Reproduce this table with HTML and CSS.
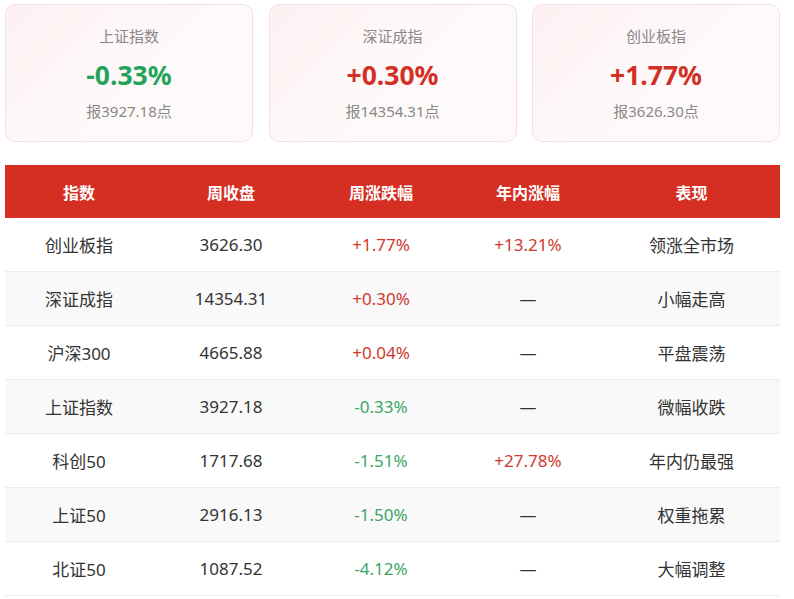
FILE: index.html
```html
<!DOCTYPE html>
<html lang="zh-CN">
<head>
<meta charset="utf-8">
<link rel="stylesheet" href="styles.css">
</head>
<body>
<div class="page">
  <div class="cards">
    <div class="card">
      <div class="card-label">上证指数</div>
      <div class="card-value down">-0.33%</div>
      <div class="card-sub">报3927.18点</div>
    </div>
    <div class="card">
      <div class="card-label">深证成指</div>
      <div class="card-value up">+0.30%</div>
      <div class="card-sub">报14354.31点</div>
    </div>
    <div class="card">
      <div class="card-label">创业板指</div>
      <div class="card-value up">+1.77%</div>
      <div class="card-sub">报3626.30点</div>
    </div>
  </div>
  <table class="data">
    <colgroup>
      <col class="c1"><col class="c2"><col class="c3"><col class="c4"><col class="c5">
    </colgroup>
    <thead>
      <tr><th>指数</th><th>周收盘</th><th>周涨跌幅</th><th>年内涨幅</th><th>表现</th></tr>
    </thead>
    <tbody>
      <tr><td>创业板指</td><td>3626.30</td><td class="up">+1.77%</td><td class="up">+13.21%</td><td>领涨全市场</td></tr>
      <tr><td>深证成指</td><td>14354.31</td><td class="up">+0.30%</td><td>—</td><td>小幅走高</td></tr>
      <tr><td>沪深300</td><td>4665.88</td><td class="up">+0.04%</td><td>—</td><td>平盘震荡</td></tr>
      <tr><td>上证指数</td><td>3927.18</td><td class="down">-0.33%</td><td>—</td><td>微幅收跌</td></tr>
      <tr><td>科创50</td><td>1717.68</td><td class="down">-1.51%</td><td class="up">+27.78%</td><td>年内仍最强</td></tr>
      <tr><td>上证50</td><td>2916.13</td><td class="down">-1.50%</td><td>—</td><td>权重拖累</td></tr>
      <tr><td>北证50</td><td>1087.52</td><td class="down">-4.12%</td><td>—</td><td>大幅调整</td></tr>
    </tbody>
  </table>
</div>
</body>
</html>
```
FILE: styles.css
```css
html, body {
  margin: 0;
  padding: 0;
  background: #ffffff;
}
body {
  font-family: "Noto Sans", "Noto Sans CJK SC", sans-serif;
  color: #333333;
}
.page {
  width: 775px;
  padding: 4px 0 0 5px;
}
.cards {
  display: grid;
  grid-template-columns: 248px 248px 248px;
  column-gap: 15.5px;
}
.card {
  border: 1px solid #f6dfe1;
  border-radius: 10px;
  background: linear-gradient(135deg, #fdf1f2 0%, #fefafa 60%, #fff8f8 100%);
  display: flex;
  flex-direction: column;
  align-items: center;
  box-sizing: border-box;
  height: 138px;
  padding-top: 20px;
}
.card-label {
  font-size: 15px;
  line-height: 22px;
  color: #888888;
}
.card-value {
  font-size: 26.5px;
  line-height: 34px;
  font-weight: 700;
  margin-top: 11px;
}
.card-sub {
  font-size: 15px;
  line-height: 22px;
  color: #888888;
  margin-top: 8px;
}
.card-value.up { color: #d32f25; }
.card-value.down { color: #23a35a; }

.data {
  margin-top: 23px;
  width: 775px;
  border-collapse: collapse;
  table-layout: fixed;
}
.c1 { width: 148px; }
.c2 { width: 156px; }
.c3 { width: 144px; }
.c4 { width: 150px; }
.c5 { width: 177px; }
.data th {
  background: #d52f23;
  color: #ffffff;
  font-size: 16px;
  font-weight: 700;
  height: 53px;
  padding: 0;
  text-align: center;
}
.data td {
  height: 53px;
  padding: 0;
  text-align: center;
  font-size: 17px;
  color: #333333;
  border-bottom: 1px solid #ececec;
}
.data tbody tr:nth-child(even) td {
  background: #f9f9f9;
}
.data td.up { color: #d0382c; }
.data td.down { color: #3aa565; }
```
